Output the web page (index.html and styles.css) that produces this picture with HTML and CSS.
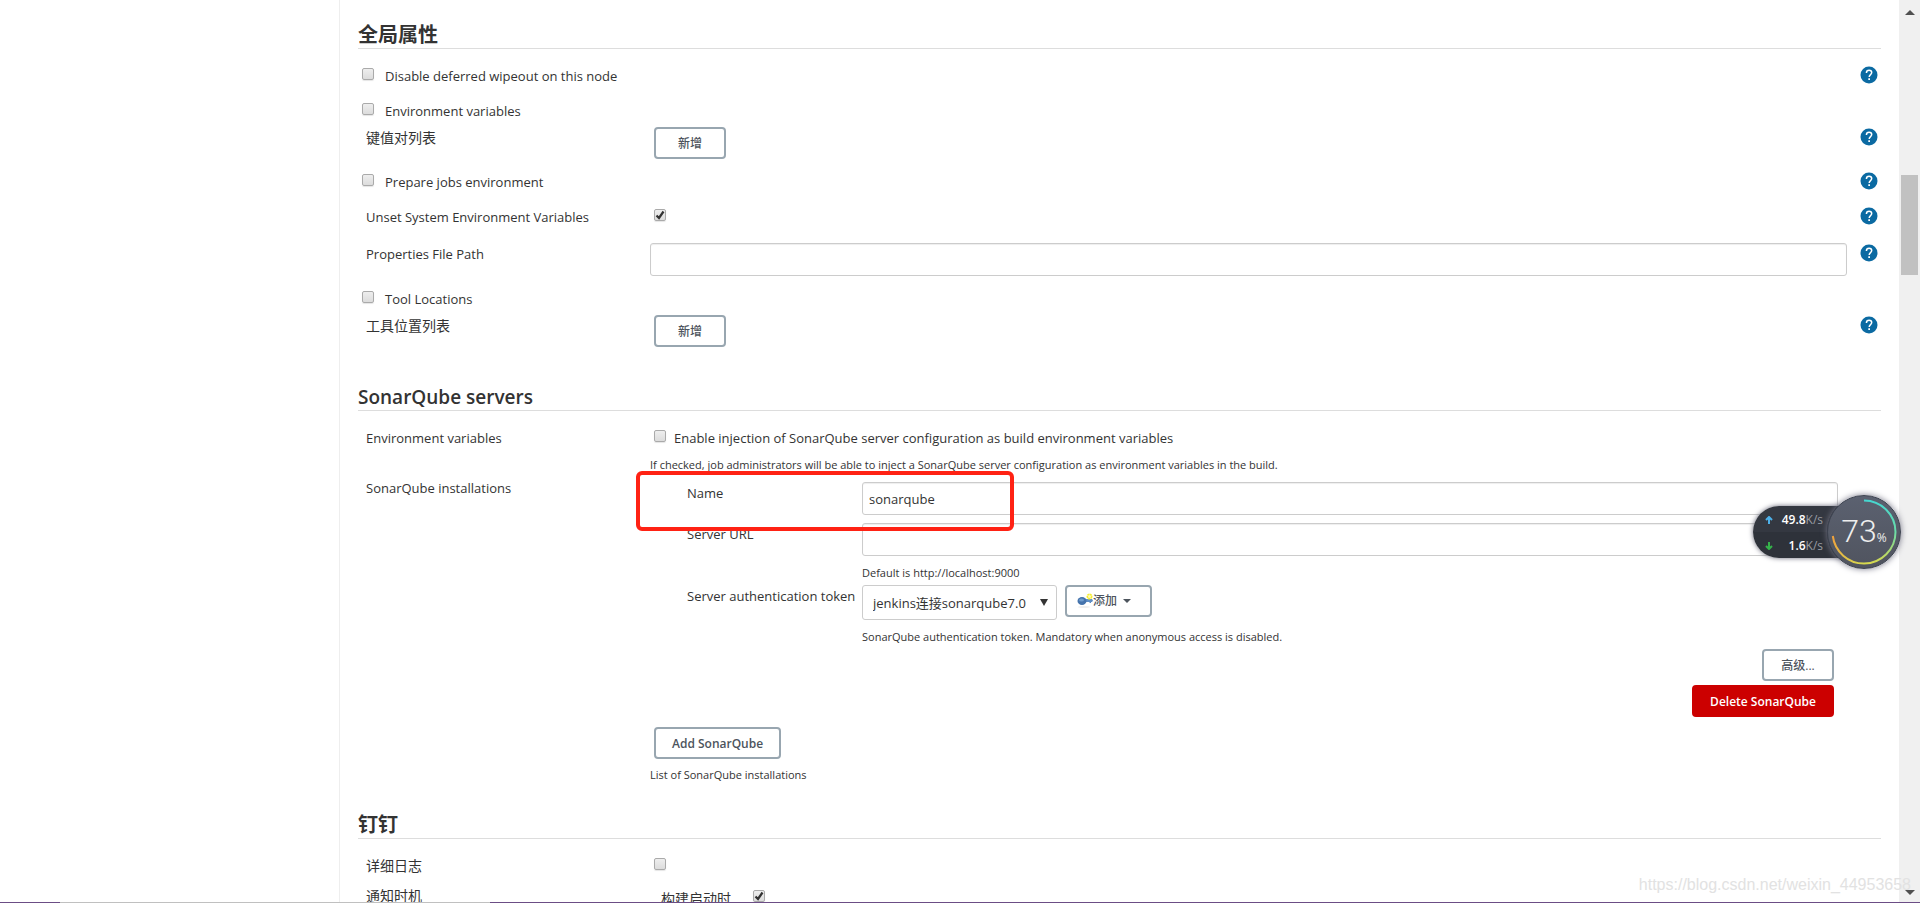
FILE: index.html
```html
<!DOCTYPE html>
<html lang="zh-CN">
<head>
    <meta charset="UTF-8">
    <title>系统设置 [Jenkins]</title>
    <link rel="stylesheet" href="styles.css">
</head>
<body>
<svg class="defs" aria-hidden="true">
    <symbol id="help" viewBox="0 0 18 18">
        <circle cx="9" cy="9" r="8.5" fill="#0b6aa2"/>
        <path d="M6.4 6.9c0-1.6 1.1-2.7 2.7-2.7s2.6 1 2.6 2.4c0 1.9-2.5 2.1-2.5 4.3" fill="none" stroke="#fff" stroke-width="1.5"/>
        <path d="M8.3 12.3h1.7v1.7H8.3z" fill="#fff"/>
    </symbol>
</svg>
<div class="page">
    <aside class="side"></aside>
    <main class="main">
        <form class="config">
            <section>
                <h2 class="cn">全局属性</h2>
                <div class="row">
                    <label class="opt"><input type="checkbox">Disable deferred wipeout on this node</label>
                    <a class="help" href="#" aria-label="Help"><svg><use href="#help"/></svg></a>
                </div>
                <div class="row head">
                    <label class="opt"><input type="checkbox">Environment variables</label>
                </div>
                <div class="row body">
                    <span class="name cn">键值对列表</span>
                    <div class="ctrl"><button class="btn cn" type="button">新增</button></div>
                    <a class="help" href="#" aria-label="Help"><svg><use href="#help"/></svg></a>
                </div>
                <div class="row">
                    <label class="opt"><input type="checkbox">Prepare jobs environment</label>
                    <a class="help" href="#" aria-label="Help"><svg><use href="#help"/></svg></a>
                </div>
                <div class="row">
                    <label class="name" for="unset">Unset System Environment Variables</label>
                    <div class="ctrl"><input type="checkbox" id="unset" checked></div>
                    <a class="help" href="#" aria-label="Help"><svg><use href="#help"/></svg></a>
                </div>
                <div class="row text-row">
                    <label class="name" for="path">Properties File Path</label>
                    <div class="ctrl"><input type="text" id="path"></div>
                    <a class="help" href="#" aria-label="Help"><svg><use href="#help"/></svg></a>
                </div>
                <div class="row head">
                    <label class="opt"><input type="checkbox">Tool Locations</label>
                </div>
                <div class="row body">
                    <span class="name cn">工具位置列表</span>
                    <div class="ctrl"><button class="btn cn" type="button">新增</button></div>
                    <a class="help" href="#" aria-label="Help"><svg><use href="#help"/></svg></a>
                </div>
            </section>

            <section class="sonar">
                <h2>SonarQube servers</h2>
                <div class="row inject">
                    <span class="name">Environment variables</span>
                    <div class="ctrl">
                        <label class="opt near"><input type="checkbox">Enable injection of SonarQube server configuration as build environment variables</label>
                        <p class="desc">If checked, job administrators will be able to inject a SonarQube server configuration as environment variables in the build.</p>
                    </div>
                </div>
                <div class="row install">
                    <span class="name">SonarQube installations</span>
                    <div class="ctrl">
                        <div class="server">
                            <div class="field">
                                <label for="sname">Name</label>
                                <input type="text" id="sname" value="sonarqube">
                                <div class="mark"></div>
                            </div>
                            <div class="field">
                                <label for="surl">Server URL</label>
                                <div>
                                    <input type="text" id="surl">
                                    <p class="desc">Default is http://localhost:9000</p>
                                </div>
                            </div>
                            <div class="field">
                                <label for="token">Server authentication token</label>
                                <div>
                                    <div class="token">
                                        <span class="select">
                                            <select id="token"><option>jenkins连接sonarqube7.0</option></select>
                                        </span>
                                        <button class="btn add cn" type="button">
                                            <svg class="key" viewBox="0 0 16 16">
                                                <ellipse cx="7" cy="14" rx="6" ry="1" fill="#eee"/>
                                                <path d="M8 6h7l1 1.500-1 1.500h-1v1h-1.500V9H8z" fill="#5f8ec5"/>
                                                <ellipse cx="5" cy="8" rx="4.500" ry="4" fill="#4573ac"/>
                                                <ellipse cx="4.500" cy="7" rx="2.500" ry="1.500" fill="#6f9ccd"/>
                                                <circle cx="12.500" cy="3.500" r="2.200" fill="#fffbc0" stroke="#f7ee30" stroke-width="1.600" stroke-dasharray="2 .4"/>
                                            </svg>添加<i class="caret"></i>
                                        </button>
                                    </div>
                                    <p class="desc">SonarQube authentication token. Mandatory when anonymous access is disabled.</p>
                                </div>
                            </div>
                            <div class="actions">
                                <button class="btn cn" type="button">高级...</button>
                                <button class="btn danger" type="button">Delete SonarQube</button>
                            </div>
                        </div>
                        <button class="btn" type="button">Add SonarQube</button>
                        <p class="desc list">List of SonarQube installations</p>
                    </div>
                </div>
            </section>

            <section>
                <h2 class="cn">钉钉</h2>
                <div class="row ding">
                    <label class="name cn" for="log">详细日志</label>
                    <div class="ctrl"><input type="checkbox" id="log"></div>
                </div>
                <div class="row when">
                    <span class="name cn">通知时机</span>
                    <div class="ctrl">
                        <label class="event cn">构建启动时<input type="checkbox" checked></label>
                    </div>
                </div>
            </section>
        </form>
    </main>
    <div class="scroll">
        <i class="up"></i>
        <div class="track"><div class="thumb"></div></div>
        <i class="down"></i>
    </div>
</div>

<div class="monitor">
    <div class="speed">
        <div>
            <svg class="arrow" viewBox="0 0 8 8"><path d="M4 8V1M1 4l3-3 3 3" fill="none" stroke="#4db1ea" stroke-width="2"/></svg>
            <b>49.8</b><span>K/s</span>
        </div>
        <div>
            <svg class="arrow" viewBox="0 0 8 8"><path d="M4 0v7M1 4l3 3 3-3" fill="none" stroke="#35b34a" stroke-width="2"/></svg>
            <b>1.6</b><span>K/s</span>
        </div>
    </div>
    <div class="ball">
        <svg class="ring" viewBox="0 0 74 74">
            <defs>
                <linearGradient id="g" x1="0" y1="0" x2="0" y2="1">
                    <stop offset="0" stop-color="#45d6d0"/>
                    <stop offset=".5" stop-color="#6bdca8"/>
                    <stop offset="1" stop-color="#d6d84e"/>
                </linearGradient>
                <linearGradient id="g2" x1="0" y1="0" x2="1" y2="1">
                    <stop offset="0" stop-color="#f0a03c"/>
                    <stop offset="1" stop-color="#d6d84e"/>
                </linearGradient>
            </defs>
            <path d="M37 5.500a31.500 31.500 0 0 1 0 63" fill="none" stroke="url(#g)" stroke-width="2"/>
            <path d="M37 68.500A31.500 31.500 0 0 1 5.800 41" fill="none" stroke="url(#g2)" stroke-width="2"/>
        </svg>
        <span class="num">73</span><span class="pct">%</span>
    </div>
</div>
<div class="watermark">https://blog.csdn.net/weixin_44953658</div>
<div class="taskbar"></div>
</body>
</html>
```
FILE: styles.css
```css
*{
    box-sizing: border-box;
    margin: 0;
    padding: 0;
}
html,body{
    height: 100%;
    overflow: hidden;
}
body{
    background: #fff;
    color: #333;
    font: 13px/20px "Open Sans", "Noto Sans CJK SC", sans-serif;
}
button,input,select{
    font: inherit;
    color: inherit;
}
.cn{
    font-size: 14px;
}
.defs{
    position: absolute;
    width: 0;
    height: 0;
}
.page{
    display: grid;
    grid-template-columns: 340px 1fr 21px;
    height: 100%;
}
.side{
    border-right: 1px solid #eee;
}
.main{
    overflow: hidden;
    padding: 18px 18px 0;
}

/* sections */
section{
    padding-bottom: 28px;
}
.sonar{
    padding-bottom: 23px;
}
h2{
    border-bottom: 1px solid #ddd;
    margin-bottom: 9px;
    padding-top: 4px;
    font-size: 19px;
    font-weight: 600;
    line-height: 26px;
}
h2.cn{
    font-size: 20px;
    font-weight: 700;
}

/* rows */
.row{
    display: grid;
    grid-template-columns: 292px 1fr 34px;
    padding: 8px 0 7px;
}
.name{
    padding-left: 8px;
}
.opt{
    grid-column: 1 / 3;
    display: flex;
    gap: 11px;
    padding-left: 4px;
}
.opt.near{
    gap: 8px;
}
.help{
    grid-column: 3;
    height: 18px;
    padding-left: 13px;
}
.help svg{
    display: block;
    width: 18px;
    height: 18px;
}
.row.head{
    padding-bottom: 6px;
}
.row.body{
    padding: 0 0 5px;
}
.body .name,.body .help{
    margin-top: 1px;
}
.text-row{
    padding: 9px 0 5px;
}
.text-row .name,.text-row .help{
    margin-top: 1px;
}
.row.inject{
    padding-bottom: 2px;
}
.row.install{
    padding: 1px 0 0;
}
.row.ding{
    padding-bottom: 2px;
}

/* controls */
input[type=checkbox]{
    appearance: none;
    flex: none;
    display: block;
    width: 12px;
    height: 12px;
    margin-top: 2px;
    border: 1px solid #aaa;
    border-radius: 2px;
    background: linear-gradient(#eee, #dcdcdc);
    box-shadow: 0 1px 1px #e5e5e5;
}
input[type=checkbox]:checked{
    background: url("data:image/svg+xml,%3Csvg xmlns='http://www.w3.org/2000/svg' viewBox='0 0 10 10'%3E%3Cpath d='M1.500 5.500l2.500 2.500 4.500-6.500' fill='none' stroke='%23333' stroke-width='2.200'/%3E%3C/svg%3E"), linear-gradient(#eee, #dcdcdc);
}
.ctrl > input[type=checkbox]{
    margin-left: 4px;
}
input[type=text]{
    display: block;
    width: 100%;
    height: 33px;
    padding: 0 6px;
    border: 1px solid #ccc;
    border-radius: 3px;
    background: #fff;
    box-shadow: inset 0 1px 1px #eee;
}
.btn{
    display: block;
    min-width: 72px;
    height: 32px;
    margin-left: 4px;
    padding: 2px 16px 0;
    border: 2px solid #98a6b0;
    border-radius: 4px;
    background: #fff;
    color: #4d545d;
    font-size: 12px;
    font-weight: 600;
    line-height: 26px;
}
.btn.cn{
    font-weight: 500;
}
.desc{
    font-size: 11px;
    line-height: 20px;
}
.inject .desc{
    padding-top: 7px;
}

/* sonarqube server */
.server{
    padding: 4px 9px 10px 37px;
}
.field{
    display: grid;
    grid-template-columns: 175px 1fr;
    position: relative;
    margin-bottom: 8px;
}
.field > label{
    padding-top: 1px;
    white-space: nowrap;
}
.field .desc{
    padding-top: 7px;
}
.field:nth-child(2){
    margin-bottom: 2px;
}
.field:nth-child(3){
    margin-bottom: 2px;
}
.mark{
    position: absolute;
    left: -51px;
    top: -11px;
    z-index: 1;
    width: 378px;
    height: 60px;
    border: 4px solid #ff2214;
    border-radius: 6px;
    pointer-events: none;
}
.token{
    display: flex;
    gap: 4px;
}
.select{
    position: relative;
}
.select select{
    appearance: none;
    display: block;
    width: 195px;
    height: 35px;
    padding: 0 10px;
    border: 1px solid #ccc;
    border-radius: 3px;
    background: #fff;
}
.select:after{
    content: "";
    position: absolute;
    right: 9px;
    top: 14px;
    border: 4px solid transparent;
    border-top: 7px solid #333;
    border-bottom: 0;
}
.btn.add{
    display: flex;
    align-items: center;
    width: 87px;
    padding: 0 10px;
}
.key{
    width: 16px;
    height: 16px;
}
.caret{
    margin-left: 6px;
    border: 4px solid transparent;
    border-top-color: #4d545d;
    border-bottom: 0;
}
.actions{
    display: flex;
    flex-direction: column;
    align-items: flex-end;
    gap: 4px;
    padding-right: 4px;
}
.btn.danger{
    border-color: #c00;
    background: #c00;
    color: #fff;
}
.desc.list{
    padding-top: 6px;
}
.event{
    display: flex;
    gap: 22px;
    padding: 3px 0 0 11px;
}
.event input[type=checkbox]{
    margin-top: 1px;
}

/* scrollbar */
.scroll{
    display: flex;
    flex-direction: column;
    align-items: center;
    padding: 10px 0 8px;
    background: #f0f0f0;
}
.up,.down{
    border: 5px solid transparent;
}
.up{
    border-top: 0;
    border-bottom-color: #505050;
}
.down{
    border-bottom: 0;
    border-top-color: #505050;
}
.track{
    flex: 1;
    padding-top: 160px;
}
.thumb{
    width: 17px;
    height: 100px;
    background: #c1c1c1;
}

/* floating network meter */
.monitor{
    position: absolute;
    right: 19px;
    top: 495px;
    z-index: 2;
    display: flex;
    align-items: center;
}
.speed{
    width: 110px;
    height: 52px;
    margin-right: -36px;
    padding: 1px 40px 0 12px;
    border-radius: 26px 0 0 26px;
    background: linear-gradient(#343841 50%, #2e323a 50%);
    box-shadow: 0 0 5px #667;
    color: #fff;
    font-size: 12px;
    line-height: 26px;
}
.speed div{
    display: flex;
    align-items: center;
}
.speed b{
    flex: 1;
    font-weight: 600;
    text-align: right;
}
.speed span{
    color: #999ca3;
}
.arrow{
    flex: none;
    width: 8px;
    height: 8px;
}
.ball{
    position: relative;
    display: flex;
    justify-content: center;
    align-items: baseline;
    width: 74px;
    height: 74px;
    border: 1px solid #3d4350;
    border-radius: 50%;
    background: linear-gradient(#5b6170, #50545f);
    box-shadow: 0 0 6px #778;
    color: #eee;
    line-height: 70px;
}
.ring{
    position: absolute;
    left: -1px;
    top: -1px;
    width: 74px;
    height: 74px;
}
.num{
    font-family: Roboto, sans-serif;
    font-size: 32px;
    font-weight: 300;
}
.pct{
    font-size: 12px;
}
.watermark{
    position: absolute;
    right: 9px;
    bottom: 8px;
    color: #e2e2e2;
    font: 16px/20px "Liberation Sans", sans-serif;
}
.taskbar{
    position: absolute;
    left: 0;
    right: 0;
    bottom: 0;
    height: 1px;
    background: linear-gradient(90deg, #6b4d85 60px, #c0c0c0 60px, #c0c0c0 490px, #6b4d85 490px);
}
```
